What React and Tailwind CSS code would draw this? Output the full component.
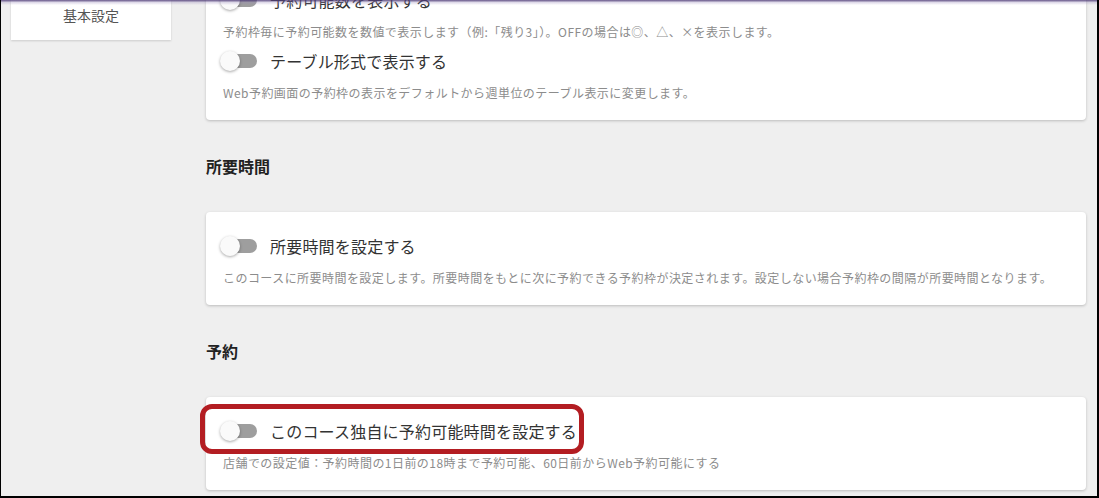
import React from "react";

const FONT = { fontFamily: '"Noto Sans CJK JP", "Noto Sans", sans-serif' };

function Toggle() {
  return (
    <div className="relative h-5 w-[38px] shrink-0">
      <div className="absolute left-[3px] top-[3px] h-[14px] w-[34px] rounded-full bg-[#9e9e9e]" />
      <div className="absolute left-0 top-0 h-5 w-5 rounded-full bg-[#fafafa] shadow-[0_1px_3px_rgba(0,0,0,0.35)]" />
    </div>
  );
}

function Row({ label }) {
  return (
    <div className="flex h-10 items-center">
      <Toggle />
      <span className="ml-[12px] text-[16px] leading-none tracking-[0.2px] text-[#333]">{label}</span>
    </div>
  );
}

function Desc({ children }) {
  return (
    <p className="mt-[3px] h-[18px] pl-[3px] text-[12px] leading-[18px] tracking-[0.45px] text-[#8c8c8c] whitespace-nowrap">
      {children}
    </p>
  );
}

function Card({ children, className = "" }) {
  return (
    <div
      className={`relative rounded-[4px] bg-white px-[14px] pt-[14px] pb-[18px] shadow-[0_1px_3px_rgba(0,0,0,0.22)] ${className}`}
    >
      {children}
    </div>
  );
}

function Heading({ children }) {
  return (
    <h2 className="my-[34px] h-6 text-[16px] font-bold leading-6 text-[#222]">{children}</h2>
  );
}

export default function App() {
  return (
    <div
      style={FONT}
      className="relative h-[498px] w-[1099px] overflow-hidden border-l border-r-2 border-b-2 border-black bg-[#efefef]"
    >
      <div className="flex">
        <aside className="ml-[10px] w-[160px] shrink-0">
          <div className="flex h-10 items-center justify-center bg-white pb-[10px] text-[14px] text-[#555] shadow-[0_1px_2px_rgba(0,0,0,0.15)]">
            基本設定
          </div>
        </aside>

        <main className="ml-[35px] mt-[-34px] w-[880px] shrink-0">
          <Card className="rounded-t-none">
            <Row label="予約可能数を表示する" />
            <Desc>予約枠毎に予約可能数を数値で表示します（例:「残り3」）。OFFの場合は◎、△、×を表示します。</Desc>
            <Row label="テーブル形式で表示する" />
            <Desc>Web予約画面の予約枠の表示をデフォルトから週単位のテーブル表示に変更します。</Desc>
          </Card>

          <Heading>所要時間</Heading>
          <Card>
            <Row label="所要時間を設定する" />
            <Desc>
              このコースに所要時間を設定します。所要時間をもとに次に予約できる予約枠が決定されます。設定しない場合予約枠の間隔が所要時間となります。
            </Desc>
          </Card>

          <Heading>予約</Heading>
          <Card>
            <Row label="このコース独自に予約可能時間を設定する" />
            <Desc>店舗での設定値：予約時間の1日前の18時まで予約可能、60日前からWeb予約可能にする</Desc>
            <div className="pointer-events-none absolute left-[-6px] top-[7px] h-[50px] w-[384px] rounded-[12px] border-[5px] border-[#b31d22]" />
          </Card>
        </main>
      </div>

      <div className="pointer-events-none absolute left-0 right-0 top-0 h-[5px] bg-gradient-to-b from-[rgba(75,55,115,0.85)] via-[rgba(150,135,185,0.3)] to-transparent" />
    </div>
  );
}
